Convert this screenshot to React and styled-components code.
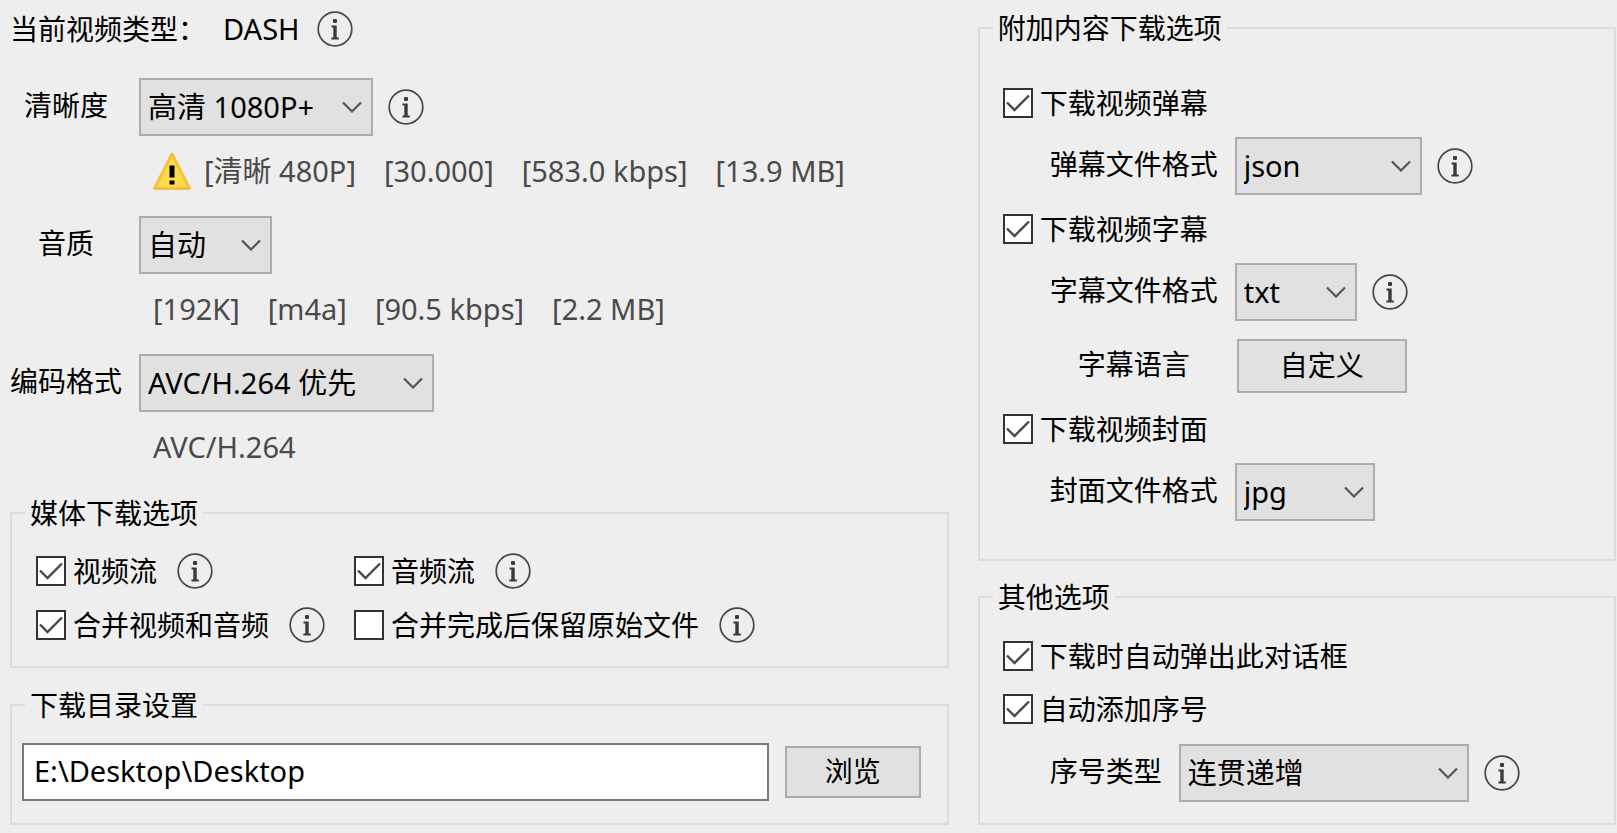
import React, { useId } from "react";
import styled, { createGlobalStyle } from "styled-components";

const GlobalStyle = createGlobalStyle`
  * { box-sizing: border-box; }
  body {
    margin: 0;
    background: #eeeeee;
    color: #000;
    font: 28px/32px "Noto Sans", "Noto Sans CJK SC", sans-serif;
  }
  input, select, button { font: inherit; color: inherit; }
`;

const Page = styled.main`
  display: grid;
  grid-template-columns: minmax(0, 25fr) minmax(0, 17fr);
  column-gap: 29px;
  align-items: start;
  padding: 11px 1px 8px 10px;
`;

const Column = styled.div`
  display: flex;
  flex-direction: column;
  min-width: 0;
`;

const TypeRow = styled.p`
  display: flex;
  align-items: center;
  height: 36px;
  margin: 0 0 31px;
  gap: 17px;
  white-space: nowrap;
`;

const TypeName = styled.span`
  font-size: 29px;
`;

const FieldRow = styled.div`
  display: flex;
  align-items: center;
  height: 58px;
  gap: 15px;
`;

const SubRow = styled(FieldRow)`
  padding-left: 47px;
`;

const FieldLabel = styled.label`
  flex: none;
  width: ${(p) => p.$width || 112}px;
  margin-right: 2px;
  padding-bottom: 4px;
  text-align: center;
  white-space: nowrap;
`;

const Details = styled.div`
  display: flex;
  align-items: center;
  height: 38px;
  margin: 16px 0 26px 143px;
  gap: 28px;
  color: #4a4a4a;
  font-size: 29px;
  white-space: nowrap;
`;

const Warned = styled.span`
  display: flex;
  align-items: center;
  gap: 13px;
`;

const Group = styled.fieldset`
  min-width: 0;
  margin: ${(p) => p.$gap || 0}px 0 0;
  padding: ${(p) => p.$top}px 0 ${(p) => p.$bottom}px;
  border: 2px solid #dddddd;
`;

const Legend = styled.legend`
  margin-left: 13px;
  padding: 0 5px;
`;

const Options = styled.div`
  display: flex;
  flex-direction: column;
  gap: ${(p) => p.$gap || 16}px;
  padding-left: 23px;
`;

const OptionGrid = styled.div`
  display: grid;
  grid-template-columns: 318px 1fr;
  row-gap: 18px;
  padding-left: 24px;
`;

const Option = styled.div`
  display: flex;
  align-items: center;
  height: 36px;
  gap: 20px;
`;

const CheckLabel = styled.label`
  display: flex;
  align-items: center;
  gap: 7px;
  white-space: nowrap;
`;

const CheckFrame = styled.span`
  display: grid;
  width: 30px;
  height: 30px;
  & > * { grid-area: 1 / 1; }
  & > svg { pointer-events: none; visibility: hidden; }
  & > input:checked + svg { visibility: visible; }
`;

const CheckInput = styled.input`
  appearance: none;
  width: 30px;
  height: 30px;
  margin: 0;
  border: 2px solid #333;
  background: #fff;
`;

const SelectFrame = styled.span`
  display: grid;
  grid-template-columns: minmax(0, 1fr) 20px 11px;
  align-items: center;
  flex: none;
  width: ${(p) => p.$width}px;
  & > svg { grid-area: 1 / 2; pointer-events: none; }
`;

const SelectInput = styled.select`
  grid-area: 1 / 1 / 2 / 4;
  appearance: none;
  width: 100%;
  height: 58px;
  padding: 0 7px;
  border: 2px solid #adadad;
  border-radius: 0;
  background: #e1e1e1;
  font-size: 29px;
  line-height: 44px;
`;

const PathRow = styled.div`
  display: flex;
  align-items: center;
  padding: 0 24px 0 10px;
  gap: 14px;
`;

const PathInput = styled.input`
  flex: 1;
  min-width: 0;
  height: 58px;
  padding: 0 10px 4px;
  border: 2px solid #7a7a7a;
  background: #fff;
  font-size: 29px;
`;

const PushButton = styled.button`
  width: ${(p) => p.$width}px;
  height: ${(p) => p.$height}px;
  margin: 0 2px;
  padding: 0 0 2px;
  border: 2px solid #adadad;
  background: #e1e1e1;
`;

const Icon = styled.svg`
  display: block;
  flex: none;
`;

function Info() {
  return (
    <Icon width="36" height="36" viewBox="0 0 36 36" role="img" aria-label="说明">
      <circle cx="18" cy="18" r="16.8" fill="none" stroke="#484848" strokeWidth="1.7" />
      <rect x="16" y="8" width="4" height="4" rx="1" fill="#3a3a3a" />
      <path d="M14.5 14.6h5.2v12h2.1v2H14.4v-2h1.9v-10h-1.8z" fill="#3a3a3a" />
    </Icon>
  );
}

function Warning() {
  return (
    <Icon width="38" height="38" viewBox="0 0 38 38" role="img" aria-label="警告">
      <path d="M19 2 36.5 36.5H1.5z" fill="#fddb4b" stroke="#f3bf45" strokeWidth="3" strokeLinejoin="round" />
      <path d="M16.5 13.5h5v12h-5zM16.5 28.5h5v4h-5z" fill="#000" />
    </Icon>
  );
}

function Check({ label, checked = true }) {
  return (
    <CheckLabel>
      <CheckFrame>
        <CheckInput type="checkbox" defaultChecked={checked} />
        <Icon width="30" height="30" viewBox="0 0 30 30" aria-hidden="true">
          <path d="M4 14.5 11.5 22 26 7.5" fill="none" stroke="#484848" strokeWidth="2.4" />
        </Icon>
      </CheckFrame>
      {label}
    </CheckLabel>
  );
}

function Select({ id, value, width }) {
  return (
    <SelectFrame $width={width}>
      <SelectInput id={id} defaultValue={value}>
        <option value={value}>{value}</option>
      </SelectInput>
      <Icon width="20" height="12" viewBox="0 0 20 12" aria-hidden="true">
        <path d="M1 1.5 10 10.5 19 1.5" fill="none" stroke="#555" strokeWidth="2.2" />
      </Icon>
    </SelectFrame>
  );
}

function Field({ label, value, width, info }) {
  const id = useId();
  return (
    <FieldRow>
      <FieldLabel htmlFor={id}>{label}</FieldLabel>
      <Select id={id} value={value} width={width} />
      {info && <Info />}
    </FieldRow>
  );
}

function SubField({ label, labelWidth = 168, value, width, info }) {
  const id = useId();
  return (
    <SubRow>
      <FieldLabel htmlFor={id} $width={labelWidth}>{label}</FieldLabel>
      <Select id={id} value={value} width={width} />
      {info && <Info />}
    </SubRow>
  );
}

export default function App() {
  return (
    <>
      <GlobalStyle />
      <Page>
        <Column>
          <TypeRow>
            <span>当前视频类型：</span>
            <TypeName>DASH</TypeName>
            <Info />
          </TypeRow>

          <Field label="清晰度" value="高清 1080P+" width={234} info />
          <Details>
            <Warned>
              <Warning />
              <span>[清晰 480P]</span>
            </Warned>
            <span>[30.000]</span>
            <span>[583.0 kbps]</span>
            <span>[13.9 MB]</span>
          </Details>

          <Field label="音质" value="自动" width={133} />
          <Details>
            <span>[192K]</span>
            <span>[m4a]</span>
            <span>[90.5 kbps]</span>
            <span>[2.2 MB]</span>
          </Details>

          <Field label="编码格式" value="AVC/H.264 优先" width={295} />
          <Details>
            <span>AVC/H.264</span>
          </Details>

          <Group $gap={5} $top={24} $bottom={23}>
            <Legend>媒体下载选项</Legend>
            <OptionGrid>
              <Option><Check label="视频流" /><Info /></Option>
              <Option><Check label="音频流" /><Info /></Option>
              <Option><Check label="合并视频和音频" /><Info /></Option>
              <Option><Check label="合并完成后保留原始文件" checked={false} /><Info /></Option>
            </OptionGrid>
          </Group>

          <Group $gap={21} $top={22} $bottom={22}>
            <Legend>下载目录设置</Legend>
            <PathRow>
              <PathInput type="text" aria-label="下载目录" defaultValue={"E:\\Desktop\\Desktop"} />
              <PushButton type="button" $width={136} $height={52}>浏览</PushButton>
            </PathRow>
          </Group>
        </Column>

        <Column>
          <Group $gap={1} $top={41} $bottom={38}>
            <Legend>附加内容下载选项</Legend>
            <Options>
              <Option><Check label="下载视频弹幕" /></Option>
              <SubField label="弹幕文件格式" value="json" width={187} info />
              <Option><Check label="下载视频字幕" /></Option>
              <SubField label="字幕文件格式" value="txt" width={122} info />
              <SubRow>
                <FieldLabel htmlFor="subtitle-language" $width={168}>字幕语言</FieldLabel>
                <PushButton id="subtitle-language" type="button" $width={170} $height={54}>自定义</PushButton>
              </SubRow>
              <Option><Check label="下载视频封面" /></Option>
              <SubField label="封面文件格式" value="jpg" width={140} />
            </Options>
          </Group>

          <Group $gap={20} $top={25} $bottom={21}>
            <Legend>其他选项</Legend>
            <Options $gap={17}>
              <Option><Check label="下载时自动弹出此对话框" /></Option>
              <Option><Check label="自动添加序号" /></Option>
              <SubField label="序号类型" labelWidth={112} value="连贯递增" width={290} info />
            </Options>
          </Group>
        </Column>
      </Page>
    </>
  );
}
